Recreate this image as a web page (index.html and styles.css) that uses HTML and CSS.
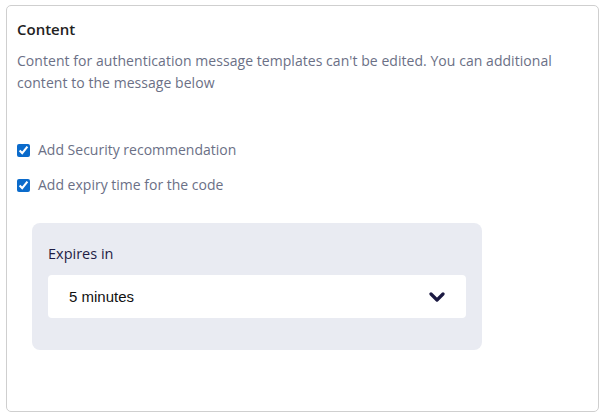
FILE: index.html
```html
<!DOCTYPE html>
<html lang="en">
<head>
    <meta charset="UTF-8">
    <meta name="viewport" content="width=device-width, initial-scale=1.0">
    <title>Content</title>
    <link rel="stylesheet" href="styles.css">
</head>
<body>
    <div class="card">
        <h2 class="card-title">Content</h2>
        <p class="card-desc">Content for authentication message templates can't be edited. You can additional content to the message below</p>

        <div class="options">
            <label class="option">
                <input type="checkbox" checked>
                <span>Add Security recommendation</span>
            </label>
            <label class="option">
                <input type="checkbox" checked>
                <span>Add expiry time for the code</span>
            </label>
        </div>

        <!-- expiry panel -->
        <div class="expiry-panel">
            <div class="expiry-label">Expires in</div>
            <div class="select-box">
                <span class="select-value">5 minutes</span>
                <svg class="chevron" width="16" height="10" viewBox="0 0 16 10">
                    <path d="M2 2 L8 8 L14 2" fill="none" stroke="#1b1942" stroke-width="3.2" stroke-linecap="round" stroke-linejoin="round"/>
                </svg>
            </div>
        </div>
    </div>
</body>
</html>
```

FILE: styles.css
```css
body {
    margin: 0;
    background: #ffffff;
    font-family: 'Open Sans', sans-serif;
}

.card {
    margin: 5px 0 0 6px;
    width: 593px;
    height: 407px;
    border: 1px solid #cfcfcf;
    border-radius: 5px;
    padding: 13px 10px 0 10px;
    box-sizing: border-box;
}

.card-title {
    margin: 0;
    font-size: 15px;
    line-height: 20px;
    font-weight: 600;
    color: #222222;
}

.card-desc {
    margin: 11px 0 0 0;
    font-size: 14px;
    line-height: 22px;
    letter-spacing: 0.05px;
    color: #6b7086;
}

.options {
    margin-top: 45px;
    display: flex;
    flex-direction: column;
    gap: 13px;
}

.option {
    display: flex;
    align-items: center;
    font-size: 14px;
    line-height: 22px;
    color: #6b7086;
}

.option input {
    margin: 0 8px 0 0;
    width: 13px;
    height: 13px;
    accent-color: #0b6bcb;
}

.expiry-panel {
    margin: 27px 0 0 15px;
    width: 450px;
    height: 127px;
    box-sizing: border-box;
    background: #e9ebf2;
    border-radius: 8px;
    padding: 20px 16px 0 16px;
}

.expiry-label {
    font-size: 14.5px;
    line-height: 22px;
    color: #1f1d45;
}

.select-box {
    margin-top: 10px;
    height: 43px;
    background: #ffffff;
    border-radius: 4px;
    display: flex;
    align-items: center;
    justify-content: space-between;
    padding: 0 21px;
}

.select-value {
    font-family: 'Liberation Sans', Arial, sans-serif;
    font-size: 15px;
    color: #111111;
}

.chevron {
    display: block;
}
```
